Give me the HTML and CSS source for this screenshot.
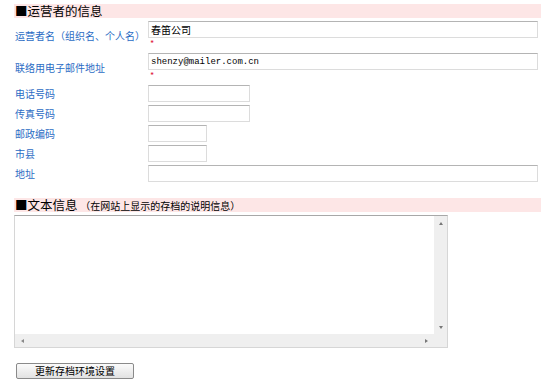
FILE: index.html
```html
<!DOCTYPE html>
<html lang="zh-CN">
<head>
    <meta charset="UTF-8">
    <title>存档环境设置</title>
    <link rel="stylesheet" href="styles.css">
</head>
<body>
<div class="main">
    <h2 class="section-title">■运营者的信息</h2>
    <div class="form-table">
        <div class="form-row">
            <div class="label">运营者名（组织名、个人名）</div>
            <div class="field">
                <input class="text wide" type="text" value="春笛公司">
                <span class="required">*</span>
            </div>
        </div>
        <div class="form-row">
            <div class="label">联络用电子邮件地址</div>
            <div class="field">
                <input class="text wide mono" type="text" value="shenzy@mailer.com.cn">
                <span class="required">*</span>
            </div>
        </div>
        <div class="form-row">
            <div class="label">电话号码</div>
            <div class="field"><input class="text medium" type="text"></div>
        </div>
        <div class="form-row">
            <div class="label">传真号码</div>
            <div class="field"><input class="text medium" type="text"></div>
        </div>
        <div class="form-row">
            <div class="label">邮政编码</div>
            <div class="field"><input class="text short" type="text"></div>
        </div>
        <div class="form-row">
            <div class="label">市县</div>
            <div class="field"><input class="text short" type="text"></div>
        </div>
        <div class="form-row">
            <div class="label">地址</div>
            <div class="field"><input class="text wide" type="text"></div>
        </div>
    </div>

    <h2 class="section-title second">■文本信息 <small>（在网站上显示的存档的说明信息）</small></h2>
    <div class="textarea-box">
        <textarea class="desc"></textarea>
        <div class="vscroll">
            <span class="arrow up"></span>
            <span class="arrow down"></span>
        </div>
        <div class="hscroll">
            <span class="arrow left"></span>
            <span class="arrow right"></span>
        </div>
        <div class="corner"></div>
    </div>

    <div class="actions">
        <button class="submit-btn" type="button">更新存档环境设置</button>
    </div>
</div>
</body>
</html>
```

FILE: styles.css
```css
body{
    margin: 0;
    background: #ffffff;
    font-family: "Noto Sans CJK SC", "Liberation Sans", sans-serif;
    color: #000000;
}
.main{
    padding: 4px 0 0 14px;
    width: 527px;
}
.section-title{
    margin: 0;
    height: 14px;
    line-height: 14px;
    padding-left: 1px;
    background: #fde6e6;
    font-size: 12.5px;
    font-weight: normal;
}
.section-title small{
    font-size: 10px;
}
.section-title.second{
    margin-top: 13px;
}
.form-table{
    padding-top: 3px;
}
.form-row{
    display: grid;
    grid-template-columns: 134px 1fr;
    align-items: center;
    padding-bottom: 3px;
}
.form-row .label{
    padding-left: 1px;
    font-size: 10px;
    line-height: 12px;
    color: #2b6cc4;
}
.form-row .field{
    display: flex;
    flex-direction: column;
    align-items: flex-start;
}
.text{
    box-sizing: border-box;
    height: 17px;
    margin: 0;
    padding: 0 2px;
    border: 1px solid #dcdcdc;
    border-top-color: #b4b4b4;
    background: #ffffff;
    font-family: "Noto Sans CJK SC", sans-serif;
    font-size: 10px;
    color: #000000;
    outline: none;
}
.text.wide{
    width: 390px;
}
.text.medium{
    width: 102px;
}
.text.short{
    width: 59px;
}
.text.mono{
    font-family: "Liberation Mono", monospace;
    font-size: 9px;
}
.required{
    height: 12px;
    line-height: 12px;
    padding-left: 2px;
    color: #e0203c;
    font-size: 9px;
}
.textarea-box{
    margin-top: 3px;
    width: 434px;
    height: 133px;
    box-sizing: border-box;
    border: 1px solid #d6d6d6;
    border-top-color: #a8a8a8;
    display: grid;
    grid-template-columns: 1fr 13px;
    grid-template-rows: 1fr 13px;
}
.textarea-box .desc{
    border: none;
    margin: 0;
    padding: 2px;
    resize: none;
    outline: none;
    overflow: hidden;
    font-family: "Noto Sans CJK SC", sans-serif;
    font-size: 10px;
}
.vscroll, .hscroll, .corner{
    background: #efefef;
    display: flex;
    justify-content: space-between;
    align-items: center;
}
.vscroll{
    flex-direction: column;
    padding: 6px 0 5px;
}
.hscroll{
    padding: 0 6px;
}
.arrow{
    width: 0;
    height: 0;
}
.arrow.up{
    border-left: 2px solid transparent;
    border-right: 2px solid transparent;
    border-bottom: 3px solid #777777;
}
.arrow.down{
    border-left: 2px solid transparent;
    border-right: 2px solid transparent;
    border-top: 3px solid #777777;
}
.arrow.left{
    border-top: 2px solid transparent;
    border-bottom: 2px solid transparent;
    border-right: 3px solid #888888;
}
.arrow.right{
    border-top: 2px solid transparent;
    border-bottom: 2px solid transparent;
    border-left: 3px solid #777777;
}
.actions{
    display: flex;
    padding: 15px 0 0 2px;
}
.submit-btn{
    width: 118px;
    height: 16px;
    padding: 0;
    border: 1px solid #8a8a8a;
    border-radius: 2px;
    background: linear-gradient(#fbfbfb, #e2e2e2);
    font-family: "Noto Sans CJK SC", sans-serif;
    font-size: 10px;
    line-height: 14px;
    color: #000000;
}
```
